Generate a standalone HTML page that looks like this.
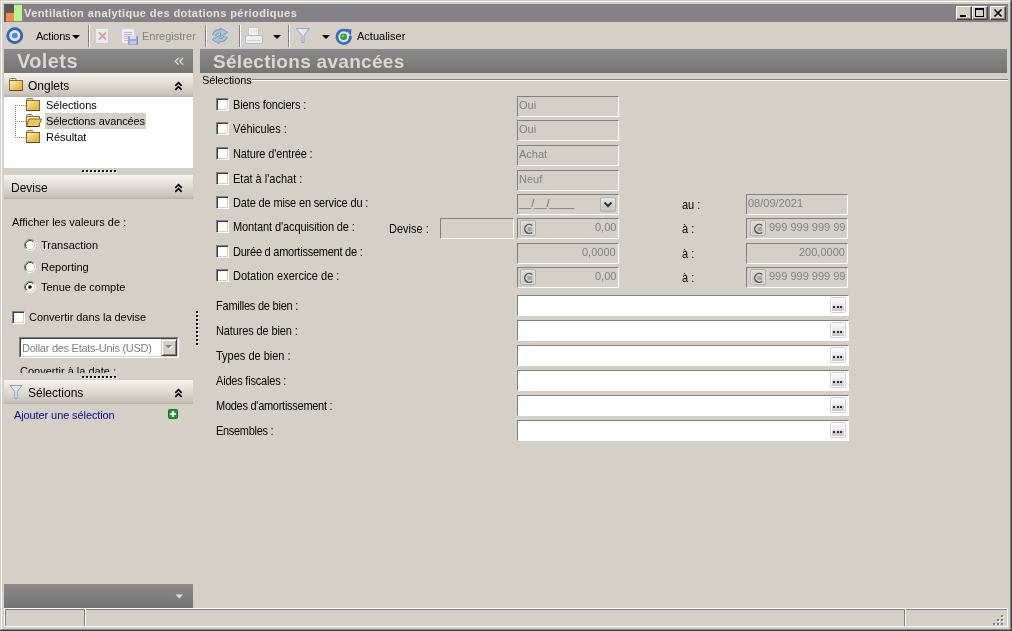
<!DOCTYPE html>
<html><head><meta charset="utf-8">
<style>
*{margin:0;padding:0;box-sizing:border-box}
html,body{width:1012px;height:631px;overflow:hidden;background:#d4d0c8;font-family:"Liberation Sans",sans-serif;font-size:11px;color:#000}
.a{position:absolute}
.s{transform:scaleY(1.12);transform-origin:0 2.3px}
.t{position:absolute;white-space:nowrap;line-height:13px;font-size:11px;will-change:transform}
.hdr{background:linear-gradient(#8b8b8b,#747474)}
.lhdr{background:linear-gradient(#f6f4ef,#ebe6df 25%,#dbd7cf 55%,#cac4bc 88%,#b6b2aa)}
.cb{position:absolute;width:13px;height:13px;background:#fff;border-top:1px solid #808080;border-left:1px solid #808080;border-right:1px solid #fff;border-bottom:1px solid #fff;box-shadow:inset 1px 1px 0 #404040,inset -1px -1px 0 #d4d0c8}
.inp{position:absolute;width:102px;height:21px;border-top:1px solid #808080;border-left:1px solid #808080;border-right:1px solid #fff;border-bottom:1px solid #fff;background:#d4d0c8;color:#808080}
.lk{position:absolute;left:517px;width:332px;height:21px;border-top:1px solid #808080;border-left:1px solid #808080;border-right:1px solid #fff;border-bottom:1px solid #fff;background:#fff}
.tb{width:16px;height:14px;background:#d4d0c8;border-top:1px solid #fff;border-left:1px solid #fff;border-right:1px solid #404040;border-bottom:1px solid #404040;box-shadow:inset -1px -1px 0 #808080}
.rb{position:absolute;width:12px;height:12px;border-radius:6px;background:#fff;border:1px solid;border-color:#808080 #fff #fff #808080;box-shadow:inset 1px 1px 0 #404040}
.eu{position:absolute;width:16px;height:16px;border:1px solid #b0aeaa;border-radius:2px;background:linear-gradient(#dcdad6,#c8c6c2);box-shadow:inset 0 0 0 1px #e4e2de;padding:0}
.eu svg{left:1px!important;top:1px!important}
.dd{position:absolute;left:82px;top:2px;width:16px;height:15px;border:1px solid #b0b0b0;border-radius:2px;background:linear-gradient(#e8e6e2,#c4c2be)}
.el{position:absolute;width:16px;height:16px;border:1px solid #d0d0d0;border-radius:2px;background:linear-gradient(#fcfcfc,#ececec 45%,#d8d8d8 60%,#c6c6c6);box-shadow:inset 0 0 0 1px #fff}
.sep{position:absolute;top:25px;width:2px;height:22px;border-left:1px solid #808080;border-right:1px solid #fff}
</style></head><body>
<!-- window frame -->
<div class="a" style="left:1px;top:1px;width:1010px;height:629px;border-left:1px solid #fff;border-top:1px solid #fff"></div>
<div class="a" style="left:1010px;top:1px;width:1px;height:629px;background:#808080"></div>
<div class="a" style="left:1011px;top:0;width:1px;height:631px;background:#404040"></div>
<div class="a" style="left:1px;top:629px;width:1010px;height:1px;background:#808080"></div>
<div class="a" style="left:0;top:630px;width:1012px;height:1px;background:#404040"></div>

<!-- title bar -->
<div class="a" style="left:4px;top:4px;width:1004px;height:18px;background:#848285"></div>

<!-- title icon -->
<div class="a" style="left:4px;top:4px;width:10px;height:9px;background:#5a5a5a"></div>
<div class="a" style="left:6px;top:13px;width:8px;height:8px;background:#f7894a"></div>
<div class="a" style="left:4px;top:13px;width:2px;height:9px;background:#5a5a5a"></div>
<div class="a" style="left:14px;top:5px;width:8px;height:16px;background:#b8f58c"></div>
<div class="t" style="left:24px;top:7px;font-weight:bold;color:#e6e2da;font-size:11px;letter-spacing:0.42px">Ventilation analytique des dotations périodiques</div>
<!-- title buttons -->
<div class="a tb" style="left:956px;top:6px"></div>
<div class="a tb" style="left:972px;top:6px"></div>
<div class="a tb" style="left:990px;top:6px"></div>
<div class="a" style="left:960px;top:15px;width:6px;height:2px;background:#000"></div>
<div class="a" style="left:975px;top:8px;width:9px;height:9px;border:1px solid #000;border-top-width:2px"></div>
<svg class="a" style="left:990px;top:6px" width="16" height="14"><path d="M4.5 3.5 L11.5 10.5 M11.5 3.5 L4.5 10.5" stroke="#000" stroke-width="1.6"/></svg>

<!-- toolbar -->
<svg class="a" style="left:5px;top:26px" width="20" height="20"><circle cx="9.75" cy="9.6" r="7" fill="#e2e8ee" stroke="#3562ba" stroke-width="2.8"/><circle cx="9.75" cy="9.6" r="2.9" fill="#4a88dc"/></svg>
<div class="t" style="left:36px;top:30px;letter-spacing:-0.25px">Actions</div>
<svg class="a" style="left:71px;top:34px" width="10" height="6"><path d="M1 1 H9 L5 5 Z" fill="#000"/></svg>
<div class="sep" style="left:88px"></div>
<!-- delete icon (disabled) -->
<svg class="a" style="left:95px;top:28px" width="16" height="17" shape-rendering="crispEdges"><rect x="1" y="1" width="12" height="14" fill="#ebebef"/><rect x="1" y="1" width="12" height="1" fill="#f4f4f8"/><rect x="13" y="2" width="1" height="14" fill="#c8ccc8"/><rect x="2" y="15" width="12" height="1" fill="#c8ccc8"/><path d="M4 4.5 L11 11.5 M11 4.5 L4 11.5" stroke="#e6a4ac" stroke-width="2" shape-rendering="auto"/><path d="M4 4.5 L11 11.5 M11 4.5 L4 11.5" stroke="#d8909a" stroke-width="0.7" shape-rendering="auto"/></svg>
<!-- save icon (disabled) -->
<svg class="a" style="left:121px;top:28px" width="18" height="17" shape-rendering="crispEdges"><rect x="1" y="1" width="12" height="14" fill="#ececf2"/><rect x="13" y="2" width="1" height="13" fill="#d0d0dc"/><g fill="#b4bcdc"><rect x="3" y="4" width="8" height="1"/><rect x="3" y="6" width="8" height="1"/><rect x="3" y="8" width="8" height="1"/><rect x="3" y="10" width="5" height="1"/><rect x="3" y="12" width="5" height="1"/></g><rect x="7" y="8" width="10" height="9" fill="#a4a4d4"/><rect x="9" y="8" width="6" height="3" fill="#dcdcf2"/><rect x="9" y="13" width="6" height="3" fill="#c8c8ea"/><rect x="16" y="9" width="1" height="8" fill="#8888c0"/></svg>
<div class="t" style="left:142px;top:30px;color:#808080">Enregistrer</div>
<div class="sep" style="left:205px"></div>
<!-- sync icon (disabled) -->
<svg class="a" style="left:209px;top:26px" width="22" height="20"><g stroke="#7c94bc" stroke-linejoin="round"><path d="M5 9.5 Q6.5 4.8 12 5.6" fill="none" stroke-width="4.2"/><path d="M11.2 2.2 L18.7 6.3 L11.6 10.6 Z" fill="#a8c6e2" stroke-width="1"/><path d="M16.8 10.2 Q15 15 9.8 14" fill="none" stroke-width="4.2"/><path d="M10.2 9.4 L3.2 13.6 L10 17.6 Z" fill="#a4c8e0" stroke-width="1"/></g><path d="M5 9.5 Q6.5 4.8 12 5.6" fill="none" stroke="#a8c6e2" stroke-width="2.4"/><path d="M16.8 10.2 Q15 15 9.8 14" fill="none" stroke="#a4c8e0" stroke-width="2.4"/><path d="M11.8 3.8 L17 6.3 L12.2 9.2 Z" fill="#a8c6e2"/><path d="M9.6 11 L4.8 13.6 L9.4 16.2 Z" fill="#a4c8e0"/></svg>
<div class="sep" style="left:239px"></div>
<!-- printer (disabled) -->
<svg class="a" style="left:244px;top:27px" width="20" height="18"><rect x="4.5" y="0.5" width="10" height="8" fill="#f4f4f4" stroke="#c8c8c8"/><path d="M6 3h7M6 5h7" stroke="#e0e0e0"/><rect x="1.5" y="8.5" width="17" height="8" rx="2" fill="#eeeeee" stroke="#b8b8b8"/><rect x="3" y="13" width="14" height="1" fill="#d0d0d0"/></svg>
<svg class="a" style="left:272px;top:34px" width="10" height="6"><path d="M1 1 H9 L5 5 Z" fill="#000"/></svg>
<div class="sep" style="left:288px"></div>
<!-- filter -->
<svg class="a" style="left:295px;top:27px" width="17" height="18"><defs><linearGradient id="flt" x1="0" y1="0" x2="1" y2="0"><stop offset="0" stop-color="#f8faff"/><stop offset="1" stop-color="#c8d4ec"/></linearGradient></defs><path d="M1.5 1.5 H14.5 L9 8.5 V15.5 H7 V8.5 Z" fill="url(#flt)" stroke="#98a4bc" stroke-width="1"/></svg>
<svg class="a" style="left:321px;top:34px" width="10" height="6"><path d="M1 1 H9 L5 5 Z" fill="#000"/></svg>
<!-- actualiser icon -->
<svg class="a" style="left:334px;top:27px" width="19" height="19"><circle cx="9.7" cy="9.8" r="5.2" fill="#dfe6dc"/><path d="M13.6 4.2 A6.8 6.8 0 1 0 16.4 8.6" fill="none" stroke="#3a6cc4" stroke-width="2.6"/><path d="M11.5 1.8 L17.6 2.6 L16.6 8.6 Z" fill="#3a6cc4"/><circle cx="9.6" cy="9.8" r="3.3" fill="#27a336"/><circle cx="9.1" cy="9.2" r="1.4" fill="#62d066"/></svg>
<div class="t" style="left:357px;top:30px">Actualiser</div>

<!-- left panel -->
<div class="a hdr" style="left:4px;top:49px;width:189px;height:24px"></div>
<div class="t" style="left:17px;top:50px;font-size:20px;line-height:23px;font-weight:bold;color:#dcd8d0;letter-spacing:0.4px">Volets</div>
<svg class="a" style="left:174px;top:57px" width="11" height="10"><path d="M4.5 1 L1.3 4.3 L4.5 7.6 M9 1 L5.8 4.3 L9 7.6" fill="none" stroke="#e4e0d8" stroke-width="1.3"/></svg>
<div class="a lhdr" style="left:4px;top:73px;width:189px;height:24px"></div>
<svg class="a" style="left:9px;top:78px" width="15" height="14"><defs><linearGradient id="fga" x1="0" y1="0" x2="1" y2="1"><stop offset="0" stop-color="#fff6b0"/><stop offset="0.6" stop-color="#f0c050"/><stop offset="1" stop-color="#e0a838"/></linearGradient></defs><path d="M0.5 3 V1.5 Q0.5 0.5 1.5 0.5 H6 Q7 0.5 7 1.5 V2.5" fill="#f4e8b0" stroke="#867650"/><rect x="0.5" y="2.5" width="13" height="10" fill="url(#fga)" stroke="#7a6a48"/><path d="M1 12.5 H14" stroke="#5a4a28"/></svg>
<div class="t" style="left:28px;top:79px;font-size:12px;line-height:14px">Onglets</div>
<svg class="a" style="left:174px;top:81px" width="10" height="10"><path d="M1.3 4.8 L4.5 1.6 L7.7 4.8 M1.3 8.8 L4.5 5.6 L7.7 8.8" fill="none" stroke="#000" stroke-width="1.7"/></svg>
<!-- tree -->
<div class="a" style="left:4px;top:97px;width:189px;height:71px;background:#fff"></div>
<div class="a" style="left:15px;top:105px;width:1px;height:33px;background-image:linear-gradient(#808080 50%,transparent 50%);background-size:1px 2px"></div>
<div class="a" style="left:15px;top:105px;width:11px;height:1px;background-image:linear-gradient(90deg,#808080 50%,transparent 50%);background-size:2px 1px"></div>
<div class="a" style="left:15px;top:121px;width:11px;height:1px;background-image:linear-gradient(90deg,#808080 50%,transparent 50%);background-size:2px 1px"></div>
<div class="a" style="left:15px;top:137px;width:11px;height:1px;background-image:linear-gradient(90deg,#808080 50%,transparent 50%);background-size:2px 1px"></div>
<svg class="a" style="left:26px;top:98px" width="15" height="14"><defs><linearGradient id="fgb" x1="0" y1="0" x2="1" y2="1"><stop offset="0" stop-color="#fff6b0"/><stop offset="0.6" stop-color="#f0c050"/><stop offset="1" stop-color="#e0a838"/></linearGradient></defs><path d="M0.5 3 V1.5 Q0.5 0.5 1.5 0.5 H6 Q7 0.5 7 1.5 V2.5" fill="#f4e8b0" stroke="#867650"/><rect x="0.5" y="2.5" width="13" height="10" fill="url(#fgb)" stroke="#7a6a48"/><path d="M1 12.5 H14" stroke="#5a4a28"/></svg><svg class="a" style="left:26px;top:114px" width="17" height="14"><path d="M0.5 12.5 V1.5 Q0.5 0.5 1.5 0.5 H5.5 L7 2.5 H13.5 V5" fill="#f6eebc" stroke="#807050"/><path d="M0.5 12.5 V2.5 H13.5 V12.5 Z" fill="#f6eab0" stroke="#807050"/><path d="M3 5 H15.5 L12.5 12.5 H0.5 Z" fill="#f2c850" stroke="#7a6840"/><path d="M1 12.5 H12.5" stroke="#3a2a10"/></svg><svg class="a" style="left:26px;top:130px" width="15" height="14"><defs><linearGradient id="fgc" x1="0" y1="0" x2="1" y2="1"><stop offset="0" stop-color="#fff6b0"/><stop offset="0.6" stop-color="#f0c050"/><stop offset="1" stop-color="#e0a838"/></linearGradient></defs><path d="M0.5 3 V1.5 Q0.5 0.5 1.5 0.5 H6 Q7 0.5 7 1.5 V2.5" fill="#f4e8b0" stroke="#867650"/><rect x="0.5" y="2.5" width="13" height="10" fill="url(#fgc)" stroke="#7a6a48"/><path d="M1 12.5 H14" stroke="#5a4a28"/></svg>
<div class="a" style="left:45px;top:113px;width:101px;height:16px;background:#d4d0c8"></div>
<div class="t" style="left:46px;top:99px">Sélections</div>
<div class="t" style="left:46px;top:115px;letter-spacing:-0.1px">Sélections avancées</div>
<div class="t" style="left:46px;top:131px">Résultat</div>
<!-- splitter dots -->
<div class="a" style="left:83px;top:171px;width:34px;height:2px;background-image:linear-gradient(90deg,#fff 2px,transparent 2px);background-size:4px 2px"></div><div class="a" style="left:82px;top:170px;width:34px;height:2px;background-image:linear-gradient(90deg,#101010 2px,transparent 2px);background-size:4px 2px"></div>
<!-- devise header -->
<div class="a lhdr" style="left:4px;top:175px;width:189px;height:24px"></div>
<div class="t" style="left:11px;top:181px;font-size:12px;line-height:14px">Devise</div>
<svg class="a" style="left:174px;top:183px" width="10" height="10"><path d="M1.3 4.8 L4.5 1.6 L7.7 4.8 M1.3 8.8 L4.5 5.6 L7.7 8.8" fill="none" stroke="#000" stroke-width="1.7"/></svg>
<div class="t" style="left:12px;top:216px">Afficher les valeurs de :</div>
<div class="a" style="left:24px;top:239px;width:12px;height:12px"><svg width="12" height="12" style="position:absolute;left:0;top:0"><circle cx="6" cy="6" r="4.5" fill="#fff"/><path d="M2.11 9.89 A5.50 5.50 0 0 1 9.89 2.11" fill="none" stroke="#808080" stroke-width="1"/><path d="M9.89 2.11 A5.50 5.50 0 0 1 2.11 9.89" fill="none" stroke="#ffffff" stroke-width="1"/><path d="M2.82 9.18 A4.50 4.50 0 0 1 9.18 2.82" fill="none" stroke="#404040" stroke-width="1"/><path d="M9.18 2.82 A4.50 4.50 0 0 1 2.82 9.18" fill="none" stroke="#d4d0c8" stroke-width="1"/></svg></div>
<div class="a" style="left:24px;top:261px;width:12px;height:12px"><svg width="12" height="12" style="position:absolute;left:0;top:0"><circle cx="6" cy="6" r="4.5" fill="#fff"/><path d="M2.11 9.89 A5.50 5.50 0 0 1 9.89 2.11" fill="none" stroke="#808080" stroke-width="1"/><path d="M9.89 2.11 A5.50 5.50 0 0 1 2.11 9.89" fill="none" stroke="#ffffff" stroke-width="1"/><path d="M2.82 9.18 A4.50 4.50 0 0 1 9.18 2.82" fill="none" stroke="#404040" stroke-width="1"/><path d="M9.18 2.82 A4.50 4.50 0 0 1 2.82 9.18" fill="none" stroke="#d4d0c8" stroke-width="1"/></svg></div>
<div class="a" style="left:24px;top:281px;width:12px;height:12px"><svg width="12" height="12" style="position:absolute;left:0;top:0"><circle cx="6" cy="6" r="4.5" fill="#fff"/><path d="M2.11 9.89 A5.50 5.50 0 0 1 9.89 2.11" fill="none" stroke="#808080" stroke-width="1"/><path d="M9.89 2.11 A5.50 5.50 0 0 1 2.11 9.89" fill="none" stroke="#ffffff" stroke-width="1"/><path d="M2.82 9.18 A4.50 4.50 0 0 1 9.18 2.82" fill="none" stroke="#404040" stroke-width="1"/><path d="M9.18 2.82 A4.50 4.50 0 0 1 2.82 9.18" fill="none" stroke="#d4d0c8" stroke-width="1"/><circle cx="6" cy="6" r="1.8" fill="#000"/></svg></div>
<div class="t" style="left:41px;top:239px">Transaction</div>
<div class="t" style="left:41px;top:261px">Reporting</div>
<div class="t" style="left:41px;top:281px">Tenue de compte</div>
<div class="cb" style="left:12px;top:311px"></div>
<div class="t" style="left:29px;top:311px;letter-spacing:-0.04px">Convertir dans la devise</div>
<!-- vertical splitter dots -->
<div class="a" style="left:197px;top:312px;width:2px;height:35px;background-image:linear-gradient(#fff 2px,transparent 2px);background-size:2px 4px"></div><div class="a" style="left:196px;top:311px;width:2px;height:35px;background-image:linear-gradient(#101010 2px,transparent 2px);background-size:2px 4px"></div>
<!-- combo -->
<div class="a" style="left:19px;top:337px;width:160px;height:21px;border-top:1px solid #808080;border-left:1px solid #808080;border-right:1px solid #fff;border-bottom:1px solid #fff"></div>
<div class="a" style="left:20px;top:338px;width:158px;height:19px;border-top:1px solid #404040;border-left:1px solid #404040;border-right:1px solid #d4d0c8;border-bottom:1px solid #d4d0c8;background:#fff"></div>
<div class="t" style="left:22px;top:342px;color:#808080;letter-spacing:-0.27px">Dollar des Etats-Unis (USD)</div>
<div class="a" style="left:161px;top:339px;width:16px;height:17px;background:#d4d0c8;border-top:1px solid #d4d0c8;border-left:1px solid #d4d0c8;border-right:1px solid #404040;border-bottom:1px solid #404040;box-shadow:inset 1px 1px 0 #fff,inset -1px -1px 0 #808080"></div>
<svg class="a" style="left:164px;top:344px" width="10" height="7"><path d="M2 2 H9 L5.5 5.5 Z" fill="#fff"/><path d="M1 1 H8 L4.5 4.5 Z" fill="#808080"/></svg>
<div class="a" style="left:4px;top:366px;width:189px;height:7px;overflow:hidden"><div class="t" style="left:16px;top:-1px">Convertir à la date :</div></div>
<div class="a" style="left:83px;top:377px;width:34px;height:2px;background-image:linear-gradient(90deg,#fff 2px,transparent 2px);background-size:4px 2px"></div><div class="a" style="left:82px;top:376px;width:34px;height:2px;background-image:linear-gradient(90deg,#101010 2px,transparent 2px);background-size:4px 2px"></div>
<!-- selections header -->
<div class="a lhdr" style="left:4px;top:380px;width:189px;height:24px"></div>
<svg class="a" style="left:9px;top:384px" width="15" height="16"><path d="M1 1.5 H13 L8.2 7.5 V14.5 H5.8 V7.5 Z" fill="#dce6f6" stroke="#8ea0c0"/></svg>
<div class="t" style="left:28px;top:386px;font-size:12px;line-height:14px">Sélections</div>
<svg class="a" style="left:174px;top:388px" width="10" height="10"><path d="M1.3 4.8 L4.5 1.6 L7.7 4.8 M1.3 8.8 L4.5 5.6 L7.7 8.8" fill="none" stroke="#000" stroke-width="1.7"/></svg>
<div class="t" style="left:14px;top:409px;color:#0c0c98;letter-spacing:-0.1px">Ajouter une sélection</div>
<svg class="a" style="left:168px;top:409px" width="10" height="10"><rect x="0.5" y="0.5" width="9" height="9" rx="1" fill="#1e9a2e" stroke="#2a6a2a"/><path d="M5 2 V8 M2 5 H8" stroke="#e8ffe8" stroke-width="2"/></svg>
<!-- bottom bar -->
<div class="a hdr" style="left:4px;top:584px;width:189px;height:24px"></div>
<svg class="a" style="left:175px;top:594px" width="9" height="5"><path d="M0.5 0.5 H8 L4.25 4.5 Z" fill="#e4e0d8"/></svg>

<!-- content header -->
<div class="a hdr" style="left:200px;top:49px;width:807px;height:24px"></div>
<div class="t" style="left:213px;top:51px;font-size:19px;line-height:22px;font-weight:bold;color:#dcd8d0;letter-spacing:0.3px">Sélections avancées</div>
<div class="t" style="left:202px;top:74px;letter-spacing:-0.12px">Sélections</div>
<div class="a" style="left:252px;top:79px;width:756px;height:1px;background:#808080"></div>
<div class="a" style="left:252px;top:80px;width:756px;height:1px;background:#fff"></div>
<div class="cb" style="left:216px;top:98px"></div><div class="t s" style="left:233px;top:98px;letter-spacing:-0.13px">Biens fonciers :</div>
<div class="cb" style="left:216px;top:122px"></div><div class="t s" style="left:233px;top:122px">Véhicules :</div>
<div class="cb" style="left:216px;top:147px"></div><div class="t s" style="left:233px;top:147px;letter-spacing:-0.12px">Nature d'entrée :</div>
<div class="cb" style="left:216px;top:172px"></div><div class="t s" style="left:233px;top:172px">Etat à l'achat :</div>
<div class="cb" style="left:216px;top:196px"></div><div class="t s" style="left:233px;top:196px;letter-spacing:-0.15px">Date de mise en service du :</div>
<div class="cb" style="left:216px;top:220px"></div><div class="t s" style="left:233px;top:220px;letter-spacing:-0.1px">Montant d'acquisition de :</div>
<div class="cb" style="left:216px;top:245px"></div><div class="t s" style="left:233px;top:245px;letter-spacing:-0.24px">Durée d amortissement de :</div>
<div class="cb" style="left:216px;top:269px"></div><div class="t s" style="left:233px;top:269px">Dotation exercice de :</div>
<div class="inp" style="left:517px;top:96px"><div class="t" style="left:1px;top:2px">Oui</div></div>
<div class="inp" style="left:517px;top:120px"><div class="t" style="left:1px;top:2px">Oui</div></div>
<div class="inp" style="left:517px;top:145px"><div class="t" style="left:1px;top:2px">Achat</div></div>
<div class="inp" style="left:517px;top:170px"><div class="t" style="left:1px;top:2px">Neuf</div></div>
<div class="inp" style="left:517px;top:194px"><div class="t" style="left:1px;top:2px;color:#707070">__/__/____</div><div class="dd"><svg width="14" height="14" style="position:absolute;left:0;top:0"><path d="M3.5 4.5 L7 8 L10.5 4.5" fill="none" stroke="#303030" stroke-width="2"/></svg></div></div>
<div class="t s" style="left:682px;top:198px">au :</div><div class="inp" style="left:746px;top:194px"><div class="t" style="left:1px;top:2px">08/09/2021</div></div>
<div class="t s" style="left:389px;top:222px">Devise :</div><div class="inp" style="left:440px;top:218px;width:74px"></div>
<div class="inp" style="left:517px;top:218px"><div class="t" style="right:2px;top:2px">0,00</div><div class="eu" style="left:2px;top:1px"><svg width="14" height="14" style="position:absolute;left:0;top:0"><path d="M10.1 3.4 A4.5 4.5 0 1 0 10.1 10.4" fill="none" stroke="#4a4a4a" stroke-width="1.3"/><path d="M5.5 6 H10 M5.5 8 H10" stroke="#808080" stroke-width="1.1"/></svg></div></div>
<div class="t s" style="left:682px;top:222px">à :</div><div class="inp" style="left:746px;top:218px"><div class="t" style="right:2px;top:2px">999 999 999 99</div><div class="eu" style="left:3px;top:1px"><svg width="14" height="14" style="position:absolute;left:0;top:0"><path d="M10.1 3.4 A4.5 4.5 0 1 0 10.1 10.4" fill="none" stroke="#4a4a4a" stroke-width="1.3"/><path d="M5.5 6 H10 M5.5 8 H10" stroke="#808080" stroke-width="1.1"/></svg></div></div>
<div class="inp" style="left:517px;top:243px"><div class="t" style="right:2px;top:2px">0,0000</div></div>
<div class="t s" style="left:682px;top:247px">à :</div><div class="inp" style="left:746px;top:243px"><div class="t" style="right:2px;top:2px">200,0000</div></div>
<div class="inp" style="left:517px;top:267px"><div class="t" style="right:2px;top:2px">0,00</div><div class="eu" style="left:2px;top:1px"><svg width="14" height="14" style="position:absolute;left:0;top:0"><path d="M10.1 3.4 A4.5 4.5 0 1 0 10.1 10.4" fill="none" stroke="#4a4a4a" stroke-width="1.3"/><path d="M5.5 6 H10 M5.5 8 H10" stroke="#808080" stroke-width="1.1"/></svg></div></div>
<div class="t s" style="left:682px;top:271px">à :</div><div class="inp" style="left:746px;top:267px"><div class="t" style="right:2px;top:2px">999 999 999 99</div><div class="eu" style="left:3px;top:1px"><svg width="14" height="14" style="position:absolute;left:0;top:0"><path d="M10.1 3.4 A4.5 4.5 0 1 0 10.1 10.4" fill="none" stroke="#4a4a4a" stroke-width="1.3"/><path d="M5.5 6 H10 M5.5 8 H10" stroke="#808080" stroke-width="1.1"/></svg></div></div>
<div class="t s" style="left:216px;top:299px;letter-spacing:-0.23px">Familles de bien :</div><div class="lk" style="top:295px"></div><div class="el" style="left:830px;top:297px"><div class="a" style="left:2px;top:8px;width:2px;height:2px;background:#202020;border-radius:0.5px"></div><div class="a" style="left:6px;top:8px;width:2px;height:2px;background:#202020;border-radius:0.5px"></div><div class="a" style="left:9px;top:8px;width:2px;height:2px;background:#202020;border-radius:0.5px"></div></div>
<div class="t s" style="left:216px;top:324px;letter-spacing:-0.12px">Natures de bien :</div><div class="lk" style="top:320px"></div><div class="el" style="left:830px;top:322px"><div class="a" style="left:2px;top:8px;width:2px;height:2px;background:#202020;border-radius:0.5px"></div><div class="a" style="left:6px;top:8px;width:2px;height:2px;background:#202020;border-radius:0.5px"></div><div class="a" style="left:9px;top:8px;width:2px;height:2px;background:#202020;border-radius:0.5px"></div></div>
<div class="t s" style="left:216px;top:349px">Types de bien :</div><div class="lk" style="top:345px"></div><div class="el" style="left:830px;top:347px"><div class="a" style="left:2px;top:8px;width:2px;height:2px;background:#202020;border-radius:0.5px"></div><div class="a" style="left:6px;top:8px;width:2px;height:2px;background:#202020;border-radius:0.5px"></div><div class="a" style="left:9px;top:8px;width:2px;height:2px;background:#202020;border-radius:0.5px"></div></div>
<div class="t s" style="left:216px;top:374px;letter-spacing:-0.2px">Aides fiscales :</div><div class="lk" style="top:370px"></div><div class="el" style="left:830px;top:372px"><div class="a" style="left:2px;top:8px;width:2px;height:2px;background:#202020;border-radius:0.5px"></div><div class="a" style="left:6px;top:8px;width:2px;height:2px;background:#202020;border-radius:0.5px"></div><div class="a" style="left:9px;top:8px;width:2px;height:2px;background:#202020;border-radius:0.5px"></div></div>
<div class="t s" style="left:216px;top:399px;letter-spacing:-0.27px">Modes d'amortissement :</div><div class="lk" style="top:395px"></div><div class="el" style="left:830px;top:397px"><div class="a" style="left:2px;top:8px;width:2px;height:2px;background:#202020;border-radius:0.5px"></div><div class="a" style="left:6px;top:8px;width:2px;height:2px;background:#202020;border-radius:0.5px"></div><div class="a" style="left:9px;top:8px;width:2px;height:2px;background:#202020;border-radius:0.5px"></div></div>
<div class="t s" style="left:216px;top:424px;letter-spacing:-0.3px">Ensembles :</div><div class="lk" style="top:420px"></div><div class="el" style="left:830px;top:422px"><div class="a" style="left:2px;top:8px;width:2px;height:2px;background:#202020;border-radius:0.5px"></div><div class="a" style="left:6px;top:8px;width:2px;height:2px;background:#202020;border-radius:0.5px"></div><div class="a" style="left:9px;top:8px;width:2px;height:2px;background:#202020;border-radius:0.5px"></div></div>

<!-- status bar -->
<div class="a" style="left:4px;top:608px;width:1004px;height:1px;background:#fff"></div>
<div class="a" style="left:4px;top:609px;width:1px;height:18px;background:#fff"></div>
<div class="a" style="left:5px;top:609px;width:1003px;height:1px;background:#808080"></div>
<div class="a" style="left:5px;top:609px;width:1px;height:17px;background:#808080"></div>
<div class="a" style="left:4px;top:626px;width:1004px;height:1px;background:#fff"></div>
<div class="a" style="left:84px;top:609px;width:1px;height:17px;background:#808080"></div>
<div class="a" style="left:85px;top:609px;width:1px;height:17px;background:#fff"></div>
<div class="a" style="left:904px;top:609px;width:1px;height:17px;background:#808080"></div>
<div class="a" style="left:905px;top:609px;width:1px;height:17px;background:#fff"></div>
<div class="a" style="left:1007px;top:609px;width:1px;height:18px;background:#fff"></div>
<svg class="a" style="left:993px;top:614px" width="12" height="11"><g fill="#fff"><rect x="9" y="2" width="2" height="2"/><rect x="5" y="6" width="2" height="2"/><rect x="9" y="6" width="2" height="2"/><rect x="1" y="10" width="2" height="2"/><rect x="5" y="10" width="2" height="2"/><rect x="9" y="10" width="2" height="2"/></g><g fill="#808080"><rect x="8" y="1" width="2" height="2"/><rect x="4" y="5" width="2" height="2"/><rect x="8" y="5" width="2" height="2"/><rect x="0" y="9" width="2" height="2"/><rect x="4" y="9" width="2" height="2"/><rect x="8" y="9" width="2" height="2"/></g></svg>



</body></html>
